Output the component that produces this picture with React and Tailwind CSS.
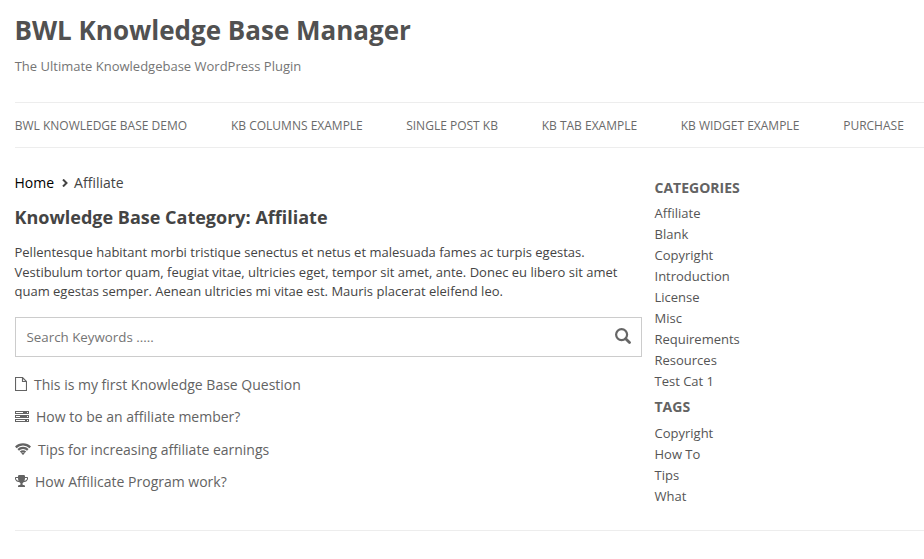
const nav = [
  ['BWL KNOWLEDGE BASE DEMO', 'w-[216.3px]'],
  ['KB COLUMNS EXAMPLE', 'w-[175.2px]'],
  ['SINGLE POST KB', 'w-[135.5px]'],
  ['KB TAB EXAMPLE', 'w-[139px]'],
  ['KB WIDGET EXAMPLE', 'w-[162.5px]'],
  ['PURCHASE', 'w-[62px]'],
];
const categories = ['Affiliate', 'Blank', 'Copyright', 'Introduction', 'License', 'Misc', 'Requirements', 'Resources', 'Test Cat 1'];
const tags = ['Copyright', 'How To', 'Tips', 'What'];

function FileIcon() {
  return (
    <svg className="h-[14px] w-[12px]" viewBox="0 0 12 14" fill="none" stroke="currentColor" strokeWidth="1.15">
      <path d="M.5.5h7l4 4v9H.5zM7.5.5v4h4" />
    </svg>
  );
}

function ServerIcon() {
  return (
    <svg className="h-[11px] w-[14px]" viewBox="0 0 14 11" fill="currentColor">
      <path fillRule="evenodd" d="M0 0h14v3H0zM1 1v1h7V1zM12 1v1h1V1zM0 4h14v3H0zM1 5v1h4V5zM12 5v1h1V5zM0 8h14v3H0zM1 9v1h9V9zM12 9v1h1V9z" />
    </svg>
  );
}

function WifiIcon() {
  return (
    <svg className="h-[12px] w-[16px]" viewBox="0 0 16 12" fill="none" stroke="currentColor" strokeWidth="2.2">
      <path d="M.8 4.4a10.2 10.2 0 0 1 14.4 0M3.200 6.900a6.8 6.8 0 0 1 9.600 0M5.600 9.300a3.4 3.4 0 0 1 4.800 0" />
      <path d="M8 12 6.400 10.400a2.200 2.200 0 0 1 3.200 0z" fill="currentColor" stroke="none" />
    </svg>
  );
}

function TrophyIcon() {
  return (
    <svg className="h-[12px] w-[13px]" viewBox="0 0 1664 1536" fill="currentColor">
      <path d="M458 755q-74-162-74-371H128v96q0 78 94.500 162T458 755zm1078-275v-96h-256q0 209-74 371 141-29 235.500-113T1536 480zm128-128v128q0 71-41.500 143t-112 130-173 97.500T1122 895q-42 54-95 95-38 34-52.500 72.500T960 1152q0 54 30.500 91t97.500 37q75 0 133.500 45.500T1280 1440v64q0 14-9 23t-23 9H416q-14 0-23-9t-9-23v-64q0-69 58.500-114.500T576 1280q67 0 97.500-37t30.500-91q0-51-14.500-89.500T637 990q-53-41-95-95-113-5-215.500-44.500t-173-97.500-112-130T0 480V352q0-40 28-68t68-28h288v-96q0-66 47-113T544 0h576q66 0 113 47t47 113v96h288q40 0 68 28t28 68z" />
    </svg>
  );
}

function SearchIcon() {
  return (
    <svg className="h-4 w-4 text-[#666]" viewBox="0 0 16 16" fill="none" stroke="currentColor">
      <circle cx="6.6" cy="6.6" r="5.5" strokeWidth="2.2" />
      <path d="m10.700 10.700 3.800 3.800" strokeWidth="2.800" strokeLinecap="round" />
    </svg>
  );
}

const posts = [
  [<FileIcon />, 'This is my first Knowledge Base Question'],
  [<ServerIcon />, 'How to be an affiliate member?'],
  [<WifiIcon />, 'Tips for increasing affiliate earnings'],
  [<TrophyIcon />, 'How Affilicate Program work?'],
];

export default function App() {
  return (
    <div className="h-[559px] w-[924px] overflow-hidden bg-white pl-[15px] font-['Open_Sans',sans-serif] text-[#444]">
      <header>
        <h1 className="-ml-[0.5px] pt-[11px] text-[26px] leading-[39px] font-bold whitespace-nowrap text-[#515151]">BWL Knowledge Base Manager</h1>
        <p className="mt-[6px] -ml-[0.3px] text-[13px] leading-5 text-[#757575]">The Ultimate Knowledgebase WordPress Plugin</p>
        <nav className="mt-[26px] flex h-[46px] items-center border-y border-[#ededed] pt-[2px] text-[12px] text-[#6a6a6a]">
          {nav.map(([label, width]) => <a key={label} className={`${width} -ml-[0.3px] mr-[0.3px] shrink-0 whitespace-nowrap`}>{label}</a>)}
        </nav>
      </header>
      <div className="flex h-[382px]">
        <main className="w-[627px] shrink-0 pt-[24px]">
          <div className="-ml-[0.5px] flex h-5 items-center text-[14px]">
            <span className="text-black">Home</span>
            <svg className="mt-[2px] mr-[6px] ml-2 h-2 w-[6px]" viewBox="0 0 6 8" fill="none" stroke="currentColor" strokeWidth="2"><path d="m1 .5 3.500 3.500L1 7.500" /></svg>
            <span>Affiliate</span>
          </div>
          <h2 className="mt-[13px] -ml-[0.5px] text-[18px] leading-[25px] font-bold">Knowledge Base Category: Affiliate</h2>
          <p className="mt-[13px] -ml-[0.5px] text-[13px] leading-[19.5px] whitespace-nowrap">
            Pellentesque habitant morbi tristique senectus et netus et malesuada fames ac turpis egestas.<br />
            Vestibulum tortor quam, feugiat vitae, ultricies eget, tempor sit amet, ante. Donec eu libero sit amet<br />
            quam egestas semper. Aenean ultricies mi vitae est. Mauris placerat eleifend leo.
          </p>
          <div className="mt-[15px] flex h-10 items-center justify-between border border-[#ccc] pr-[10px] pl-[10.5px] text-[13.333px] text-[#757575]">
            <span className="pt-[2px]">Search Keywords .....</span>
            <span className="-mt-[2px]"><SearchIcon /></span>
          </div>
          <ul className="mt-[11.6px] text-[14px] text-[#636363]">
            {posts.map(([icon, label]) => (
              <li key={label} className="flex h-[32.4px] items-center gap-[7px]">{icon}<span>{label}</span></li>
            ))}
          </ul>
        </main>
        <aside className="ml-[12.5px] pt-[29px] text-[13px] leading-[21px] text-[#555]">
          <h3 className="text-[14px] font-bold text-[#636363]">CATEGORIES</h3>
          <ul className="mt-[5px]">{categories.map((item) => <li key={item}>{item}</li>)}</ul>
          <h3 className="mt-[4px] text-[14px] font-bold text-[#636363]">TAGS</h3>
          <ul className="mt-[6px]">{tags.map((item) => <li key={item}>{item}</li>)}</ul>
        </aside>
      </div>
      <footer className="border-t border-[#ededed]" />
    </div>
  );
}
